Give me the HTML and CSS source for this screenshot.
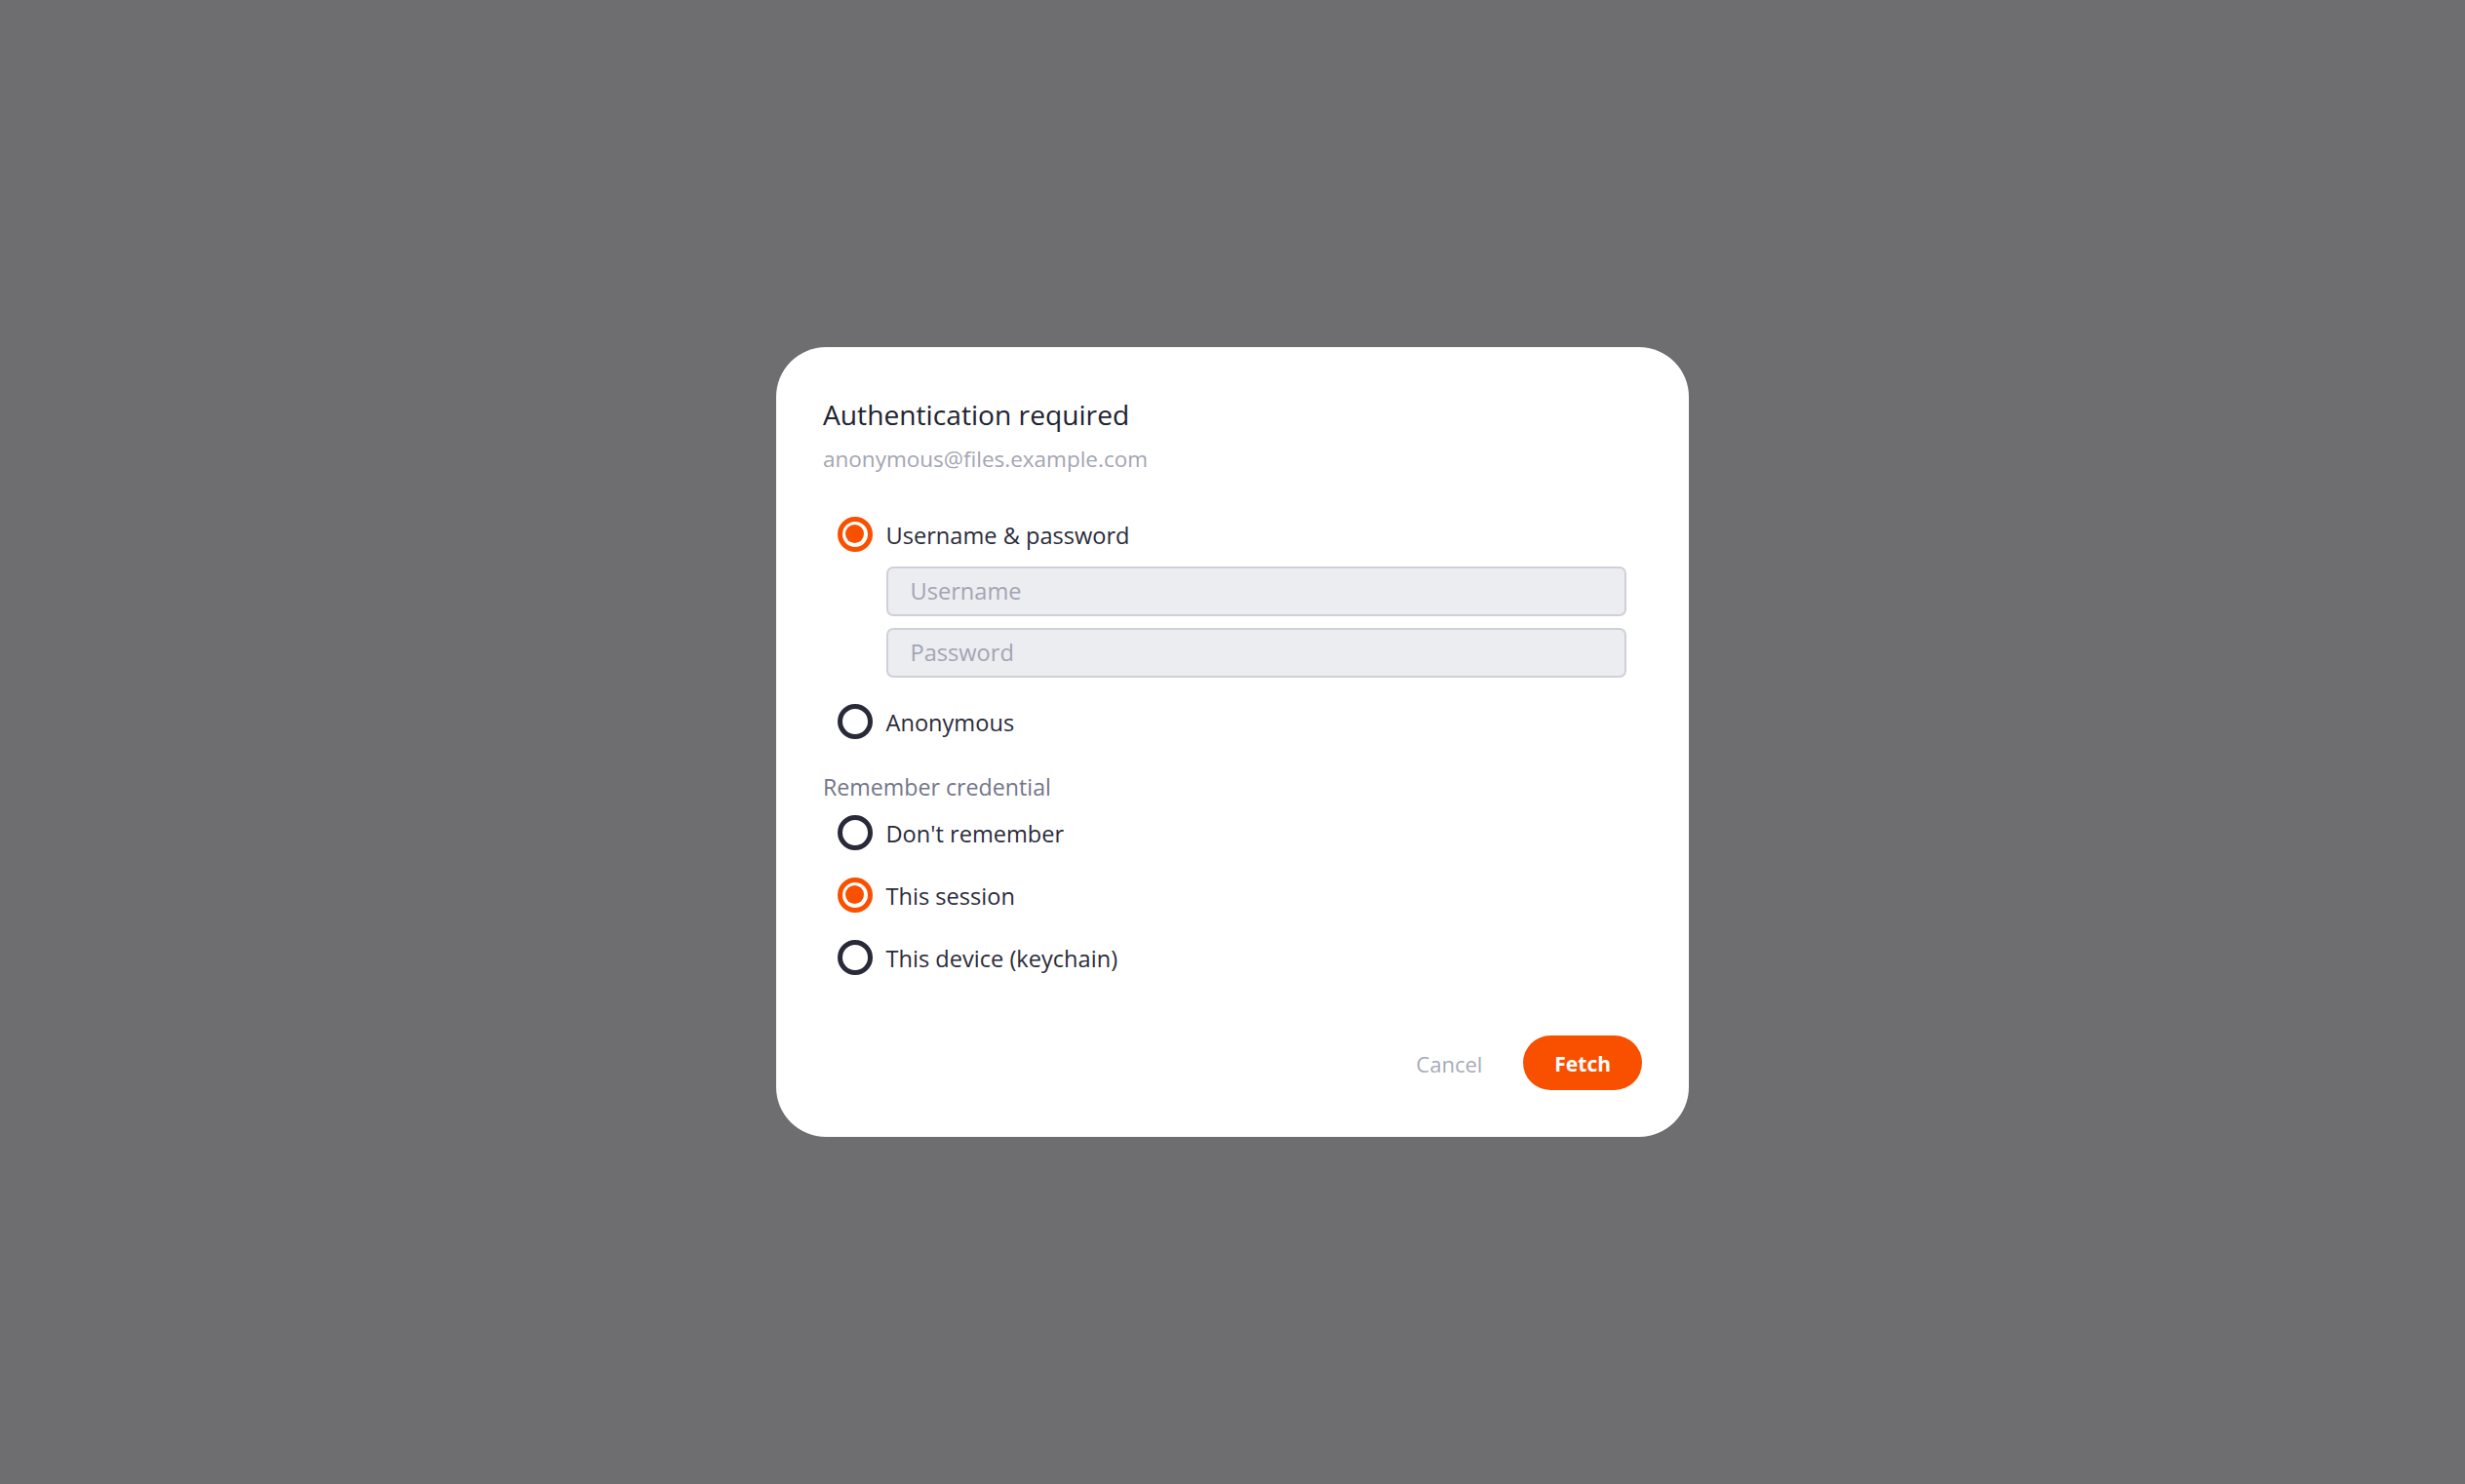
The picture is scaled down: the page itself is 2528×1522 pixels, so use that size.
FILE: index.html
```html
<!DOCTYPE html>
<html lang="en">
<head>
<meta charset="utf-8">
<title>Authentication required</title>
<link rel="stylesheet" href="styles.css">
</head>
<body>
<div class="backdrop">
  <div class="dialog" role="dialog" aria-labelledby="dlg-title">
    <h1 class="title" id="dlg-title">Authentication required</h1>
    <div class="subtitle">anonymous@files.example.com</div>

    <div class="group auth-group">
      <label class="row">
        <span class="radio checked"></span>
        <span class="label">Username &amp; password</span>
      </label>
      <div class="fields">
        <input class="field" type="text" placeholder="Username">
        <input class="field" type="password" placeholder="Password">
      </div>
      <label class="row anon">
        <span class="radio"></span>
        <span class="label">Anonymous</span>
      </label>
    </div>

    <div class="section-label">Remember credential</div>
    <div class="group remember-group">
      <label class="row">
        <span class="radio"></span>
        <span class="label">Don't remember</span>
      </label>
      <label class="row">
        <span class="radio checked"></span>
        <span class="label">This session</span>
      </label>
      <label class="row">
        <span class="radio"></span>
        <span class="label">This device (keychain)</span>
      </label>
    </div>

    <div class="actions">
      <button class="btn btn-cancel" type="button">Cancel</button>
      <button class="btn btn-primary" type="button">Fetch</button>
    </div>
  </div>
</div>
</body>
</html>
```

FILE: styles.css
```css
html, body {
  margin: 0;
  padding: 0;
  height: 100%;
}

body {
  background: #6e6e70;
  font-family: "Open Sans", "Noto Sans", "Liberation Sans", sans-serif;
  color: #2b2c3b;
}

.backdrop {
  height: 100%;
  display: flex;
  align-items: center;
  justify-content: center;
}

.dialog {
  box-sizing: border-box;
  width: 936px;
  background: #ffffff;
  border-radius: 51px;
  padding: 51px 48px 48px 48px;
  display: flex;
  flex-direction: column;
}

.title {
  margin: 0;
  font-size: 28.2px;
  line-height: 36px;
  font-weight: 400;
  color: #22232f;
}

.subtitle {
  margin-top: 12.5px;
  font-size: 22.5px;
  line-height: 30px;
  color: #a3a5b3;
}

.group {
  display: flex;
  flex-direction: column;
}

.auth-group {
  margin-top: 42px;
}

.row {
  height: 40px;
  display: flex;
  align-items: center;
  padding-left: 14.5px;
  cursor: pointer;
}

.radio {
  box-sizing: border-box;
  flex: none;
  width: 36px;
  height: 36px;
  border-radius: 50%;
  border: 5.5px solid #282a3a;
  display: flex;
  align-items: center;
  justify-content: center;
}

.radio.checked {
  border-color: #f95000;
}

.radio.checked::after {
  content: "";
  width: 19px;
  height: 19px;
  border-radius: 50%;
  background: #f95000;
}

.label {
  margin-left: 14px;
  padding-top: 4.5px;
  font-size: 23.6px;
  line-height: 35.5px;
  color: #2b2c3b;
}

.fields {
  margin: 13px 16px 0 64.5px;
  display: flex;
  flex-direction: column;
  gap: 12px;
}

.field {
  box-sizing: border-box;
  height: 51px;
  width: 100%;
  margin: 0;
  padding: 0 23px;
  background: #ecedf1;
  border: 2px solid #d0d1d8;
  border-radius: 7px;
  font-family: inherit;
  font-size: 23.6px;
  color: #2b2c3b;
  outline: none;
}

.field::placeholder {
  color: #a3a5b3;
  opacity: 1;
}

.anon {
  margin-top: 25px;
}

.section-label {
  margin-top: 32.5px;
  font-size: 23.2px;
  line-height: 30px;
  color: #73768a;
}

.remember-group {
  margin-top: 11.5px;
  gap: 24px;
}

.actions {
  margin-top: 60px;
  display: flex;
  justify-content: flex-end;
  align-items: center;
  gap: 42px;
}

.btn {
  box-sizing: border-box;
  height: 56px;
  margin: 0;
  border: none;
  font-family: inherit;
  cursor: pointer;
  padding-top: 2px;
  line-height: 54px;
}

.btn-cancel {
  background: transparent;
  padding-left: 0;
  padding-right: 0;
  font-size: 22px;
  color: #a7aab8;
}

.btn-primary {
  background: #f95000;
  color: #ffffff;
  font-size: 21px;
  font-weight: 700;
  padding-left: 32px;
  padding-right: 32px;
  border-radius: 28px;
}
```
